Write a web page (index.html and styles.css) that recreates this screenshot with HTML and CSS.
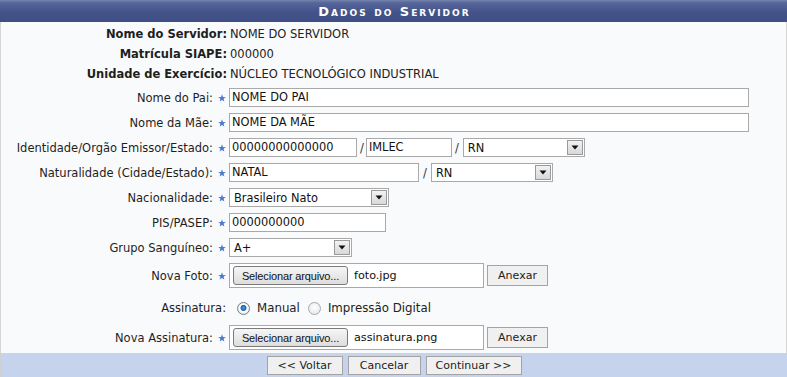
FILE: index.html
```html
<!DOCTYPE html>
<html lang="pt">
<head>
<meta charset="utf-8">
<title>Dados do Servidor</title>
<link rel="stylesheet" href="styles.css">
</head>
<body>
<div class="panel">
  <div class="caption">Dados do Servidor</div>
  <div class="body">
    <div class="row info"><div class="label bold">Nome do Servidor:</div><div class="val">NOME DO SERVIDOR</div></div>
    <div class="row info"><div class="label bold">Matrícula SIAPE:</div><div class="val">000000</div></div>
    <div class="row info"><div class="label bold">Unidade de Exercício:</div><div class="val">NÚCLEO TECNOLÓGICO INDUSTRIAL</div></div>

    <div class="row field first"><div class="label">Nome do Pai:<svg class="star" viewBox="0 0 10 10"><path d="M5 0.3 L6.2 3.6 L9.7 3.7 L7 5.9 L7.9 9.4 L5 7.4 L2.1 9.4 L3 5.9 L0.3 3.7 L3.8 3.6 Z"/></svg></div><div class="val"><div class="input w-long">NOME DO PAI</div></div></div>
    <div class="row field"><div class="label">Nome da Mãe:<svg class="star" viewBox="0 0 10 10"><path d="M5 0.3 L6.2 3.6 L9.7 3.7 L7 5.9 L7.9 9.4 L5 7.4 L2.1 9.4 L3 5.9 L0.3 3.7 L3.8 3.6 Z"/></svg></div><div class="val"><div class="input w-long">NOME DA MÃE</div></div></div>
    <div class="row field"><div class="label">Identidade/Orgão Emissor/Estado:<svg class="star" viewBox="0 0 10 10"><path d="M5 0.3 L6.2 3.6 L9.7 3.7 L7 5.9 L7.9 9.4 L5 7.4 L2.1 9.4 L3 5.9 L0.3 3.7 L3.8 3.6 Z"/></svg></div><div class="val"><div class="input w-rg">00000000000000</div><span class="slash s1">/</span><div class="input w-org">IMLEC</div><span class="slash s2">/</span><div class="select w-uf"><span class="sel-text">RN</span><span class="arrow"><svg viewBox="0 0 8 5"><path d="M0.5 0.5 H7.5 L4 4.5 Z"/></svg></span></div></div></div>
    <div class="row field"><div class="label">Naturalidade (Cidade/Estado):<svg class="star" viewBox="0 0 10 10"><path d="M5 0.3 L6.2 3.6 L9.7 3.7 L7 5.9 L7.9 9.4 L5 7.4 L2.1 9.4 L3 5.9 L0.3 3.7 L3.8 3.6 Z"/></svg></div><div class="val"><div class="input w-cid">NATAL</div><span class="slash s3">/</span><div class="select w-uf"><span class="sel-text">RN</span><span class="arrow"><svg viewBox="0 0 8 5"><path d="M0.5 0.5 H7.5 L4 4.5 Z"/></svg></span></div></div></div>
    <div class="row field"><div class="label">Nacionalidade:<svg class="star" viewBox="0 0 10 10"><path d="M5 0.3 L6.2 3.6 L9.7 3.7 L7 5.9 L7.9 9.4 L5 7.4 L2.1 9.4 L3 5.9 L0.3 3.7 L3.8 3.6 Z"/></svg></div><div class="val"><div class="select w-nac"><span class="sel-text">Brasileiro Nato</span><span class="arrow"><svg viewBox="0 0 8 5"><path d="M0.5 0.5 H7.5 L4 4.5 Z"/></svg></span></div></div></div>
    <div class="row field"><div class="label">PIS/PASEP:<svg class="star" viewBox="0 0 10 10"><path d="M5 0.3 L6.2 3.6 L9.7 3.7 L7 5.9 L7.9 9.4 L5 7.4 L2.1 9.4 L3 5.9 L0.3 3.7 L3.8 3.6 Z"/></svg></div><div class="val"><div class="input w-pis">0000000000</div></div></div>
    <div class="row field"><div class="label">Grupo Sanguíneo:<svg class="star" viewBox="0 0 10 10"><path d="M5 0.3 L6.2 3.6 L9.7 3.7 L7 5.9 L7.9 9.4 L5 7.4 L2.1 9.4 L3 5.9 L0.3 3.7 L3.8 3.6 Z"/></svg></div><div class="val"><div class="select w-gs"><span class="sel-text">A+</span><span class="arrow"><svg viewBox="0 0 8 5"><path d="M0.5 0.5 H7.5 L4 4.5 Z"/></svg></span></div></div></div>
    <div class="row file-row"><div class="label">Nova Foto:<svg class="star" viewBox="0 0 10 10"><path d="M5 0.3 L6.2 3.6 L9.7 3.7 L7 5.9 L7.9 9.4 L5 7.4 L2.1 9.4 L3 5.9 L0.3 3.7 L3.8 3.6 Z"/></svg></div><div class="val"><div class="file"><span class="file-btn">Selecionar arquivo...</span><span class="file-name">foto.jpg</span></div><span class="btn anexar">Anexar</span></div></div>
    <div class="row radio-row"><div class="label">Assinatura:</div><div class="val"><span class="radio checked"></span><span class="radio-label">Manual</span><span class="radio"></span><span class="radio-label">Impressão Digital</span></div></div>
    <div class="row file-row last"><div class="label">Nova Assinatura:<svg class="star" viewBox="0 0 10 10"><path d="M5 0.3 L6.2 3.6 L9.7 3.7 L7 5.9 L7.9 9.4 L5 7.4 L2.1 9.4 L3 5.9 L0.3 3.7 L3.8 3.6 Z"/></svg></div><div class="val"><div class="file"><span class="file-btn">Selecionar arquivo...</span><span class="file-name">assinatura.png</span></div><span class="btn anexar">Anexar</span></div></div>
  </div>
  <div class="footer">
    <span class="btn voltar">&lt;&lt; Voltar</span>
    <span class="btn cancelar">Cancelar</span>
    <span class="btn continuar">Continuar &gt;&gt;</span>
  </div>
</div>
</body>
</html>
```

FILE: styles.css
```css
html, body {
  margin: 0;
  padding: 0;
  background: #ffffff;
}
body {
  font-family: "DejaVu Sans", Verdana, sans-serif;
  font-size: 11px;
  color: #222222;
}
.panel {
  width: 787px;
  height: 377px;
  display: flex;
  flex-direction: column;
  overflow: hidden;
}
.caption {
  height: 22px;
  flex: none;
  background: linear-gradient(to bottom, #7483ad 0px, #56659a 3px, #44548a 12px, #3f4f85 22px);
  color: #ffffff;
  font-weight: bold;
  font-variant: small-caps;
  font-size: 13px;
  letter-spacing: 2px;
  display: flex;
  align-items: center;
  justify-content: center;
  padding-top: 1px;
  padding-left: 2px;
  box-sizing: border-box;
}
.body {
  flex: 1;
  background: #f9fafc;
  border-left: 1px solid #d6d6d6;
  border-right: 1px solid #d6d6d6;
  padding-top: 2px;
  padding-bottom: 3px;
}
.row {
  display: flex;
  align-items: center;
}
.row.info { height: 20px; }
.row.field { height: 25px; }
.row.field.first { margin-top: 1px; }
.row.file-row { height: 31px; }
.row.radio-row { height: 34px; }
.row.file-row.last { height: 25px; }
.label {
  width: 225px;
  flex: none;
  display: flex;
  justify-content: flex-end;
  align-items: center;
  white-space: nowrap;
  font-size: 11.5px;
  color: #1e1e1e;
}
.label.bold {
  font-weight: bold;
  font-size: 11.5px;
  width: 226px;
}
.star {
  width: 8px;
  height: 8px;
  margin-left: 5px;
  fill: #4f79c9;
}
.val {
  padding-left: 3px;
  display: flex;
  align-items: center;
  white-space: nowrap;
}
.row.info .val {
  font-size: 11.5px;
  padding-left: 3px;
}
.input {
  height: 19px;
  box-sizing: border-box;
  border: 1px solid #a9a9a9;
  background: #ffffff;
  padding: 0 2px;
  display: flex;
  align-items: center;
  line-height: 17px;
  color: #111111;
  font-size: 11.4px;
}
.w-long { width: 520px; }
.w-rg { width: 128px; }
.w-org { width: 86px; }
.w-cid { width: 190px; }
.w-pis { width: 157px; }
.slash {
  color: #333333;
  font-size: 11.5px;
}
.s1 { margin: 0 2px 0 3px; }
.s2 { margin: 0 4px 0 3px; }
.s3 { margin: 0 4px 0 4px; }
.select {
  height: 19px;
  box-sizing: border-box;
  border: 1px solid #a9a9a9;
  background: #ffffff;
  display: flex;
  align-items: center;
  justify-content: space-between;
  padding-left: 4px;
  padding-right: 1px;
  font-size: 11.4px;
  color: #111111;
}
.w-uf { width: 122px; }
.w-nac { width: 160px; }
.w-gs { width: 123px; }
.arrow {
  width: 16px;
  height: 15px;
  box-sizing: border-box;
  border: 1px solid #9a9a9a;
  background: linear-gradient(to bottom, #f2f2f2, #d8d8d8);
  display: flex;
  align-items: center;
  justify-content: center;
}
.arrow svg {
  width: 8px;
  height: 5px;
  fill: #111111;
}
.file {
  width: 255px;
  height: 25px;
  box-sizing: border-box;
  border: 1px solid #a9a9a9;
  background: #ffffff;
  display: flex;
  align-items: center;
  padding-left: 3px;
}
.file-btn {
  width: 115px;
  height: 19px;
  box-sizing: border-box;
  border: 1px solid #7a7a7a;
  border-radius: 3px;
  background: linear-gradient(to bottom, #f6f6f6, #dddddd);
  font-family: "Liberation Sans", Arial, sans-serif;
  font-size: 11px;
  letter-spacing: -0.15px;
  color: #111111;
  display: flex;
  align-items: center;
  justify-content: center;
}
.file-name {
  margin-left: 6px;
  font-size: 11.2px;
  color: #111111;
}
.btn {
  height: 21px;
  box-sizing: border-box;
  border: 1px solid #a4a4a4;
  background: #f0f0f0;
  display: inline-flex;
  align-items: center;
  justify-content: center;
  font-size: 11px;
  color: #222222;
}
.anexar {
  width: 61px;
  margin-left: 3px;
}
.radio {
  width: 13px;
  height: 13px;
  box-sizing: border-box;
  border-radius: 50%;
  border: 1px solid #a8a8a8;
  background: radial-gradient(circle at 50% 40%, #ffffff 0%, #e2e2e2 100%);
  display: inline-block;
  margin-left: 8px;
}
.radio.checked {
  border-color: #6d7f95;
  background: radial-gradient(circle at 50% 45%, #4a9ce0 0px, #1b66b3 2.6px, #ffffff 3.4px, #e8e8e8 6px);
}
.radio-label {
  margin-left: 7px;
  font-size: 11.8px;
  color: #222222;
}
.radio-label + .radio { margin-left: 8px; }
.footer {
  height: 24px;
  flex: none;
  background: #c5d3ec;
  display: flex;
  align-items: center;
  justify-content: center;
  gap: 5px;
  border-left: 1px solid #d0d0d0;
}
.footer .btn { height: 19px; }
.voltar { width: 76px; }
.cancelar { width: 73px; }
.continuar { width: 96px; }
```
